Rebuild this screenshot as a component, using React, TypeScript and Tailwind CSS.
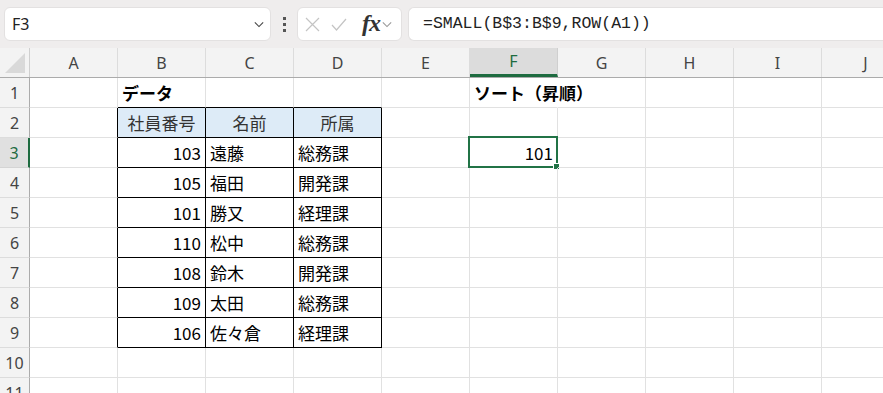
import { ReactNode } from "react"

const cols = ["A", "B", "C", "D", "E", "F", "G", "H", "I", "J"]
const rows = [1, 2, 3, 4, 5, 6, 7, 8, 9, 10, 11]

const data = [
    ["103", "遠藤", "総務課"],
    ["105", "福田", "開発課"],
    ["101", "勝又", "経理課"],
    ["110", "松中", "総務課"],
    ["108", "鈴木", "開発課"],
    ["109", "太田", "総務課"],
    ["106", "佐々倉", "経理課"],
]

const jp = "font-['Noto_Sans_CJK_JP',sans-serif]"

const Chevron = ({ className }: { className: string }) => (
    <svg className={className} viewBox="0 0 12 8" fill="none" stroke="currentColor" strokeWidth="1.3">
        <path d="M1 1.5 L6 6.5 L11 1.5" />
    </svg>
)

const cellContent = (c: number, r: number): ReactNode => {
    if (r === 1 && c === 1) return <span className="pl-[4px] font-bold">データ</span>
    if (r === 1 && c === 5)
        return <span className="relative z-10 pl-[4px] pr-[2px] font-bold whitespace-nowrap bg-white">ソート（昇順）</span>
    if (r === 2 && c === 1) return <span className="w-full text-center text-[#333]">社員番号</span>
    if (r === 2 && c === 2) return <span className="w-full text-center text-[#333]">名前</span>
    if (r === 2 && c === 3) return <span className="w-full text-center text-[#333]">所属</span>
    if (r >= 3 && r <= 9 && c >= 1 && c <= 3) {
        const v = data[r - 3][c - 1]
        if (c === 1) return <span className="w-full text-right pr-[4px]">{v}</span>
        return <span className="pl-[4px]">{v}</span>
    }
    if (r === 3 && c === 5) return <span className="w-full text-right pr-[4px]">101</span>
    return null
}

const cellClass = (c: number, r: number) => {
    const inTable = r >= 2 && r <= 9 && c >= 1 && c <= 3
    const leftOf = c === 0 && r >= 2 && r <= 9
    const above = r === 1 && c >= 1 && c <= 3
    const overflow = r === 1 && c === 5
    const right = inTable || leftOf ? "border-r-black" : overflow ? "border-r-white" : "border-r-[#e1e1e1]"
    const bottom = inTable || above ? "border-b-black" : "border-b-[#e1e1e1]"
    const bg = r === 2 && inTable ? "bg-[#ddebf7]" : ""
    return `relative flex items-center shrink-0 w-[88px] h-[30px] border-r border-b ${right} ${bottom} ${bg}`
}

const App = () => {
    return (
        <div className={`w-[883px] h-[393px] overflow-hidden bg-white ${jp} text-[17px] text-black`}>
            {/* Formula bar */}
            <div className="flex items-center h-[48px] bg-[#efeded] pl-[4px] gap-[6px]">
                <div className="flex items-center justify-between w-[267px] h-[34px] bg-white rounded-[6px] border border-[#e3e1e1] pl-[7px] pr-[6px]">
                    <span className="font-['Noto_Sans',sans-serif] text-[16px] text-[#222]">F3</span>
                    <Chevron className="w-[10px] h-[7px] text-[#444]" />
                </div>
                <div className="flex flex-col gap-[3px] w-[14px] items-center">
                    <div className="w-[3px] h-[3px] bg-[#555]" />
                    <div className="w-[3px] h-[3px] bg-[#555]" />
                    <div className="w-[3px] h-[3px] bg-[#555]" />
                </div>
                <div className="flex items-center w-[105px] h-[34px] bg-white rounded-[6px] border border-[#e3e1e1] pl-[7px] gap-[11px]">
                    <svg className="w-[15px] h-[15px]" viewBox="0 0 15 15" stroke="#c4c4c4" strokeWidth="1.2">
                        <path d="M1 1 L14 14 M14 1 L1 14" />
                    </svg>
                    <svg className="w-[16px] h-[13px]" viewBox="0 0 16 13" fill="none" stroke="#c4c4c4" strokeWidth="1.2">
                        <path d="M1 7 L5.5 12 L15 1" />
                    </svg>
                    <div className="flex items-center gap-[2px] ml-[4px]">
                        <span className="font-['Liberation_Serif',serif] italic font-bold text-[24px] leading-none text-[#333] -mt-[3px] tracking-[-1px]">fx</span>
                        <Chevron className="w-[10px] h-[7px] text-[#999]" />
                    </div>
                </div>
                <div className="flex items-center flex-1 h-[34px] bg-white rounded-l-[6px] border border-r-0 border-[#e3e1e1] pl-[14px]">
                    <span className="font-['Liberation_Mono',monospace] text-[16.5px] text-[#222] whitespace-nowrap">=SMALL(B$3:B$9,ROW(A1))</span>
                </div>
            </div>

            {/* Column headers */}
            <div className="flex h-[30px] bg-[#f3f3f3] border-b border-[#ababab] font-['Noto_Sans',sans-serif] text-[16px] text-[#444]">
                <div className="relative shrink-0 w-[30px] h-full border-r border-[#cfcfcf]">
                    <svg className="absolute left-[5px] top-[5px] w-[20px] h-[20px]" viewBox="0 0 20 20">
                        <path d="M0 20 L20 0 L20 20 Z" fill="#d9d9d9" />
                    </svg>
                </div>
                {cols.map((col, i) => (
                    <div
                        key={col}
                        className={
                            i === 5
                                ? "flex items-center justify-center shrink-0 w-[88px] h-full border-r border-[#cfcfcf] bg-[#dcdcdc] text-[#1e6b40] border-b-[3px] border-b-[#1e6b40]"
                                : "flex items-center justify-center shrink-0 w-[88px] h-full border-r border-[#dcdcdc]"
                        }
                    >
                        {col}
                    </div>
                ))}
            </div>

            {/* Rows */}
            {rows.map((r) => (
                <div key={r} className="flex">
                    <div
                        className={
                            r === 3
                                ? "flex items-center justify-center shrink-0 w-[30px] h-[30px] bg-[#e0e0e0] border-b border-[#d4d4d4] border-r-[2px] border-r-[#1e6b40] font-['Noto_Sans',sans-serif] text-[16px] text-[#1e6b40]"
                                : "flex items-center justify-center shrink-0 w-[30px] h-[30px] bg-[#f3f3f3] border-b border-[#dcdcdc] border-r border-r-[#ababab] font-['Noto_Sans',sans-serif] text-[16px] text-[#444]"
                        }
                    >
                        {r}
                    </div>
                    {cols.map((col, c) => (
                        <div key={col} className={cellClass(c, r)}>
                            {cellContent(c, r)}
                            {r === 3 && c === 5 && (
                                <div className="absolute -left-[2px] -top-[2px] w-[90px] h-[32px] border-2 border-[#217346]">
                                    <div className="absolute -right-[4px] -bottom-[4px] w-[7px] h-[7px] bg-[#217346] border border-white" />
                                </div>
                            )}
                        </div>
                    ))}
                </div>
            ))}
        </div>
    )
}

export default App
